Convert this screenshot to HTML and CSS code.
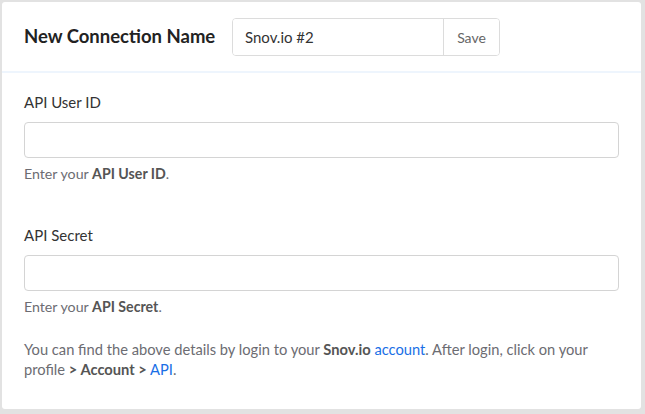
FILE: index.html
```html
<!DOCTYPE html>
<html lang="en">
<head>
<meta charset="UTF-8" />
<title>Snov.io Connection</title>
<link rel="stylesheet" href="styles.css">
</head>
<body>
<div class="card">
  <!-- Connection name -->
  <div class="card-header">
    <h3>New Connection Name</h3>
    <div class="name-group">
      <input type="text" class="name-input" value="Snov.io #2" />
      <button class="save-btn">Save</button>
    </div>
  </div>

  <div class="card-body">
    <div class="field">
      <label for="userId">API User ID</label>
      <input type="text" id="userId" />
      <p class="help">Enter your <b>API User ID</b>.</p>
    </div>

    <div class="field last">
      <label for="secret">API Secret</label>
      <input type="text" id="secret" />
      <p class="help">Enter your <b>API Secret</b>.</p>
    </div>

    <p class="help note">You can find the above details by login to your <b>Snov.io</b> <a href="#">account</a>. After login, click on your profile <b>&gt; Account &gt;</b> <a href="#">API</a>.</p>
  </div>
</div>
</body>
</html>
```

FILE: styles.css
```css
html, body {
  margin: 0;
  height: 100%;
}
body {
  font-family: Lato, 'Open Sans', sans-serif;
  background: #e2e2e2;
  padding: 2px 4px 0 2px;
  box-sizing: border-box;
  color: #333;
}
.card {
  background: #fff;
  height: 407px;
  border-radius: 3px;
}
/* Header */
.card-header {
  display: flex;
  align-items: center;
  padding: 16px 22px 15px 22px;
  border-bottom: 2px solid #eef5fd;
}
.card-header h3 {
  margin: 0 0 3px;
  font-size: 18.5px;
  font-weight: bold;
  color: #222;
  width: 208px;
}
.name-group {
  display: flex;
  height: 36px;
  border: 1px solid #dcdcdc;
  border-radius: 4px;
  overflow: hidden;
}
.name-input {
  width: 210px;
  border: none;
  padding: 0 12px;
  box-sizing: border-box;
  font-family: inherit;
  font-size: 15px;
  color: #333;
  outline: none;
}
.save-btn {
  border: none;
  border-left: 1px solid #dcdcdc;
  background: #fff;
  width: 56px;
  font-family: inherit;
  font-size: 14px;
  color: #666;
  padding: 0;
}
/* Body */
.card-body {
  padding: 20px 22px 0 22px;
}
.field {
  margin-bottom: 42px;
}
.field.last {
  margin-bottom: 22px;
}
.field label {
  display: block;
  font-size: 15px;
  color: #333;
  margin-bottom: 11px;
}
.field input {
  display: block;
  width: 100%;
  height: 36px;
  box-sizing: border-box;
  border: 1px solid #d4d4d4;
  border-radius: 4px;
  margin: 0;
}
.help {
  font-size: 14.2px;
  color: #6c6c72;
  margin: 6px 0 0;
  line-height: 20px;
}
.help b {
  color: #555;
}
.help a {
  color: #1a6fe6;
  text-decoration: none;
}
.note {
  margin-top: 0;
  font-size: 14.7px;
}
```
